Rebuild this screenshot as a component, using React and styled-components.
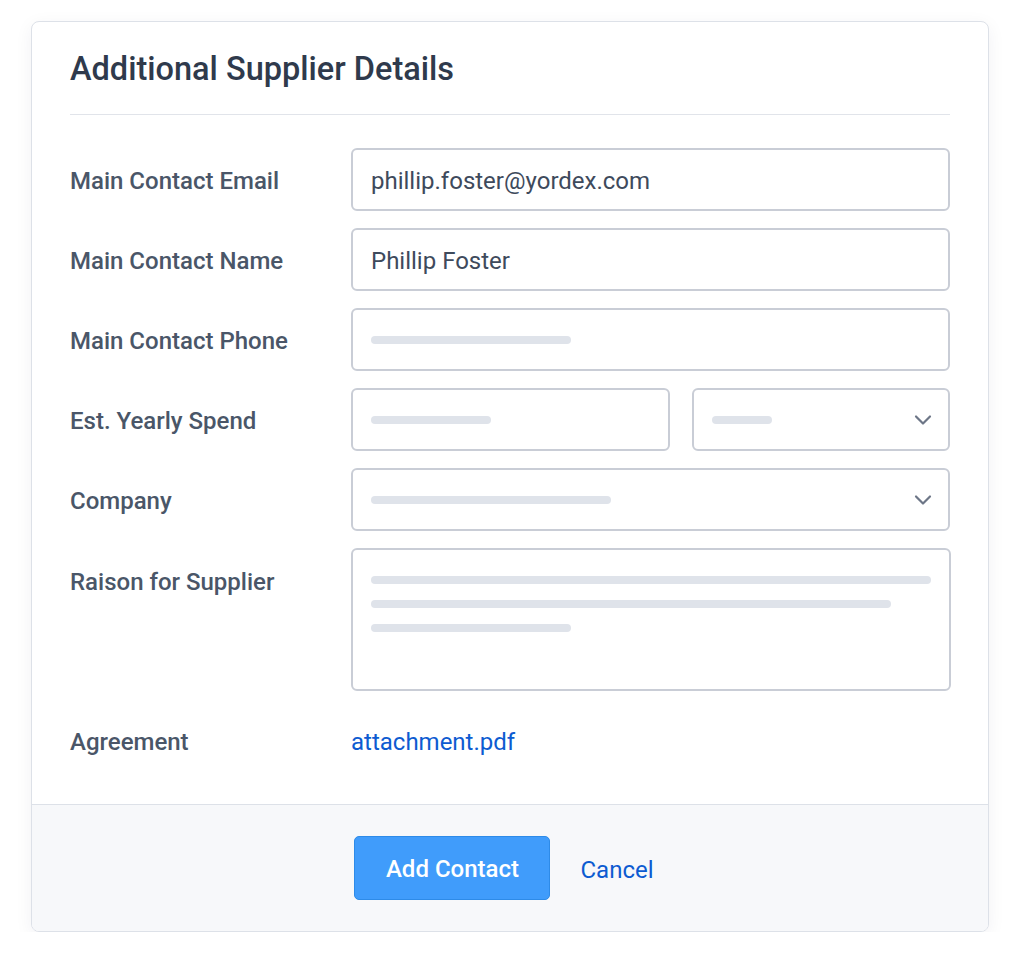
import React from 'react';
import styled, { createGlobalStyle } from 'styled-components';

const GlobalStyle = createGlobalStyle`
    html, body {
        margin: 0;
        padding: 0;
        background: #ffffff;
    }
    body {
        font-family: Roboto, "Liberation Sans", Arial, sans-serif;
        -webkit-font-smoothing: antialiased;
    }
`;

const Page = styled.div`
    padding: 21px 0 0 31px;
`;

const Card = styled.div`
    width: 958px;
    box-sizing: border-box;
    background: #ffffff;
    border: 1px solid #dde1e8;
    border-radius: 8px;
    box-shadow: 0 4px 18px rgba(30, 40, 60, 0.06);
    overflow: hidden;
`;

const Body = styled.div`
    padding: 27px 38px 46px 38px;
`;

const Title = styled.h2`
    margin: 0;
    font-size: 32.5px;
    line-height: 40px;
    font-weight: 500;
    color: #2f3a4c;
    padding-bottom: 25px;
    border-bottom: 1px solid #e1e4ea;
`;

const Form = styled.div`
    display: flex;
    flex-direction: column;
    gap: 17px;
    padding-top: 33px;
`;

const Row = styled.div`
    display: grid;
    grid-template-columns: 281px 1fr;
    align-items: ${p => (p.$top ? 'start' : 'center')};
`;

const Label = styled.div`
    font-size: 24px;
    font-weight: 500;
    color: #4a5668;
    line-height: 32px;
    padding-top: ${p => (p.$top ? '18px' : '3px')};
`;

const Field = styled.div`
    height: ${p => p.$height || 63}px;
    box-sizing: border-box;
    border: 2px solid #c9cdd6;
    border-radius: 6px;
    background: #ffffff;
    display: flex;
    align-items: ${p => (p.$multi ? 'flex-start' : 'center')};
    flex-direction: ${p => (p.$multi ? 'column' : 'row')};
    gap: ${p => (p.$multi ? '16px' : '0')};
    padding: ${p => (p.$multi ? '26px 18px' : '0 18px')};
    font-size: 24px;
    color: #3e4a5c;
`;

const Value = styled.span`
    padding-top: 3px;
`;

const Split = styled.div`
    display: grid;
    grid-template-columns: 319px 1fr;
    gap: 22px;
`;

const Bar = styled.div`
    width: ${p => p.$w}px;
    height: 8px;
    border-radius: 4px;
    background: #dfe3ea;
    flex-shrink: 0;
`;

const Chevron = styled.svg`
    margin-left: auto;
    margin-right: -2px;
    color: #6d7687;
`;

const LinkText = styled.a`
    display: inline-block;
    padding-top: 3px;
    font-size: 24px;
    color: #0d5bd1;
    text-decoration: none;
    line-height: 32px;
`;

const AgreementRow = styled(Row)`
    padding-top: 32px;
`;

const Footer = styled.div`
    border-top: 1px solid #dde1e8;
    background: #f7f8fa;
    display: flex;
    justify-content: center;
    align-items: center;
    gap: 18px;
    padding: 31px 0 31px 0;
`;

const PrimaryButton = styled.button`
    width: 196px;
    height: 64px;
    padding-top: 3px;
    border: 1px solid #2e8be8;
    border-radius: 5px;
    background: #409cfb;
    color: #ffffff;
    font-family: inherit;
    font-size: 24px;
    font-weight: 500;
    cursor: pointer;
`;

const CancelButton = styled.button`
    border: none;
    background: none;
    padding: 3px 12px 0 12px;
    font-family: inherit;
    font-size: 24px;
    color: #0d5bd1;
    cursor: pointer;
`;

const ChevronDown = () => (
    <Chevron width="18" height="12" viewBox="0 0 18 12" fill="none">
        <path d="M2 2.5l7 7 7-7" stroke="currentColor" strokeWidth="2.2" strokeLinecap="round" strokeLinejoin="round" />
    </Chevron>
);

export default function App() {
    return (
        <Page>
            <GlobalStyle />
            <Card>
                <Body>
                    <Title>Additional Supplier Details</Title>
                    <Form>
                        <Row>
                            <Label>Main Contact Email</Label>
                            <Field><Value>phillip.foster@yordex.com</Value></Field>
                        </Row>
                        <Row>
                            <Label>Main Contact Name</Label>
                            <Field><Value>Phillip Foster</Value></Field>
                        </Row>
                        <Row>
                            <Label>Main Contact Phone</Label>
                            <Field><Bar $w={200} /></Field>
                        </Row>
                        <Row>
                            <Label>Est. Yearly Spend</Label>
                            <Split>
                                <Field><Bar $w={120} /></Field>
                                <Field><Bar $w={60} /><ChevronDown /></Field>
                            </Split>
                        </Row>
                        <Row>
                            <Label>Company</Label>
                            <Field><Bar $w={240} /><ChevronDown /></Field>
                        </Row>
                        <Row $top>
                            <Label $top>Raison for Supplier</Label>
                            <Field $multi $height={143}>
                                <Bar $w={560} />
                                <Bar $w={520} />
                                <Bar $w={200} />
                            </Field>
                        </Row>
                    </Form>
                    <AgreementRow>
                        <Label>Agreement</Label>
                        <div><LinkText href="#">attachment.pdf</LinkText></div>
                    </AgreementRow>
                </Body>
                <Footer>
                    <PrimaryButton>Add Contact</PrimaryButton>
                    <CancelButton>Cancel</CancelButton>
                </Footer>
            </Card>
        </Page>
    );
}
